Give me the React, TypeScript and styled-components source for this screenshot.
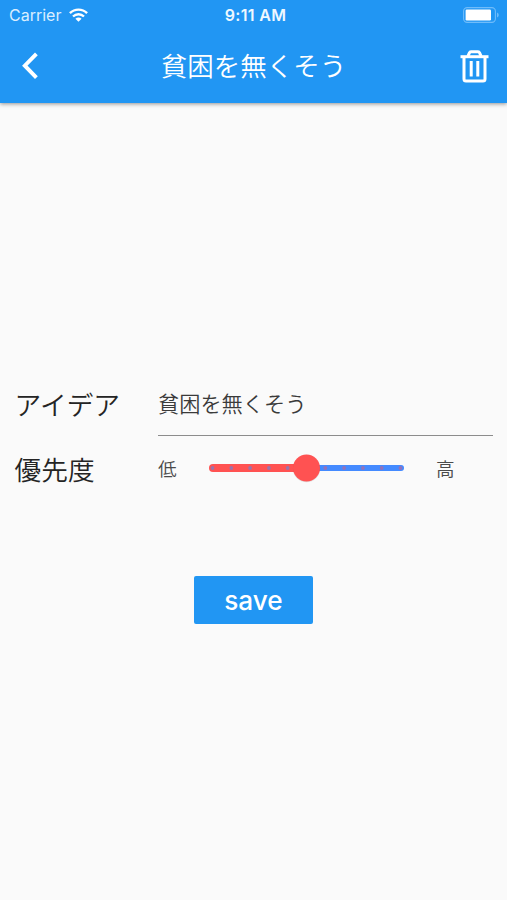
import React, { useState } from "react";
import styled, { createGlobalStyle } from "styled-components";

const GlobalStyle = createGlobalStyle`
  * { box-sizing: border-box; }
  html, body { margin: 0; padding: 0; background: #fafafa; }
  button, input { font: inherit; border: 0; padding: 0; margin: 0; background: none; }
`;

const Screen = styled.div`
  width: 507px;
  height: 900px;
  display: flex;
  flex-direction: column;
  overflow: hidden;
  background: #fafafa;
  font-family: Inter, "Noto Sans CJK JP", sans-serif;
  font-weight: 350;
  color: #242424;
`;

const Header = styled.header`
  flex: none;
  height: 103px;
  background: #2196f3;
  color: #fff;
  box-shadow: 0 1px 4px rgba(0, 0, 0, 0.42);
`;

const StatusBar = styled.div`
  height: 30px;
  display: grid;
  grid-template-columns: 1fr auto 1fr;
  align-items: center;
  padding: 0 8px 0 9px;
`;

const Carrier = styled.div`
  display: flex;
  align-items: center;
  gap: 8px;
  font-size: 16px;
  font-weight: 400;
  line-height: 30px;
  color: #d9eeff;
`;

const Clock = styled.div`
  padding-left: 3px;
  font-size: 16px;
  font-weight: 600;
  line-height: 30px;
  color: #eef8ff;
  letter-spacing: 0.35px;
`;

const Battery = styled.svg`
  justify-self: end;
`;

const NavBar = styled.nav`
  height: 72px;
  display: grid;
  grid-template-columns: 60px 1fr 60px;
  align-items: center;
`;

const IconButton = styled.button<{ $shift?: number }>`
  height: 72px;
  padding-right: ${(p) => p.$shift ?? 0}px;
  display: flex;
  align-items: center;
  justify-content: center;
  color: #fff;
`;

const Title = styled.h1`
  margin: 0;
  font-size: 26.5px;
  font-weight: 350;
  line-height: 36px;
  text-align: center;
`;

const Form = styled.main`
  flex: 1;
  padding: 268px 14px 0 14px;
  display: flex;
  flex-direction: column;
`;

const Row = styled.div<{ $height: number }>`
  height: ${(p) => p.$height}px;
  display: grid;
  grid-template-rows: 100%;
  grid-template-columns: 144px 1fr;
`;

const Label = styled.label`
  padding-left: 0.6px;
  font-size: 26.7px;
  line-height: 68px;
`;

const TextField = styled.input`
  width: 100%;
  height: 65px;
  padding-bottom: 1px;
  border-bottom: 1px solid #8c8c8c;
  outline: 0;
  font-size: 21.2px;
  font-weight: 350;
  color: #3a3a3a;
`;

const PriorityField = styled.div`
  height: 64px;
  display: grid;
  grid-template-columns: 51px 195px 1fr;
  align-items: center;
`;

const Bound = styled.span<{ $inset?: number }>`
  padding-left: ${(p) => p.$inset ?? 0}px;
  padding-top: 1px;
  font-size: 18.6px;
  line-height: 28px;
  color: #4a4a4a;
`;

const SliderArt = styled.svg`
  display: block;
`;

const SaveButton = styled.button`
  align-self: center;
  width: 119px;
  height: 48px;
  margin-top: 76px;
  padding-top: 1px;
  border-radius: 2px;
  background: #2196f3;
  color: #fff;
  font-size: 26.2px;
  font-weight: 500;
  line-height: 48px;
`;

const WifiIcon = () => (
  <svg width="19" height="14" viewBox="0 0 19 14" fill="none" stroke="#fff" strokeWidth="2.4">
    <path d="M0.9 5.2C5.8.4 13.2.4 18.1 5.2" />
    <path d="M4 8.5c3.2-3.1 7.8-3.1 11 0" />
    <path d="M6.4 10.7c1.8-1.7 4.4-1.7 6.2 0L9.5 13.8z" fill="#fff" stroke="none" />
  </svg>
);

const BatteryIcon = () => (
  <Battery width="36" height="16" viewBox="0 0 36 16">
    <rect x="0.6" y="0.6" width="31.8" height="14.8" rx="3.6" fill="none" stroke="#6fbcfa" strokeWidth="1.1" />
    <rect x="2.6" y="2.6" width="25.4" height="10.8" rx="1.2" fill="#fff" />
    <path d="M34 5.5c2.3.8 2.3 4.2 0 5z" fill="#6fbcfa" />
  </Battery>
);

const BackIcon = () => (
  <svg width="16" height="28" viewBox="0 0 16 28" fill="none" stroke="#fff" strokeWidth="3.9">
    <path d="M14.4 1.8 2.8 13.7l11.6 11.9" />
  </svg>
);

const TrashIcon = () => (
  <svg width="29" height="33" viewBox="0 0 29 33" fill="none" stroke="#fff" strokeWidth="3">
    <path d="M0.5 6.7h28" />
    <path d="M7.9 6.2 9.4 2.9q.4-1.2 1.6-1.2h7q1.2 0 1.6 1.2l1.5 3.3" />
    <path d="M4 6.5V29q0 2 2 2h17q2 0 2-2V6.5" />
    <path d="M11.2 11v15.5M17.8 11v15.5" />
  </svg>
);

const STEPS = 10;

const Slider = ({ value }: { value: number }) => {
  const x = 3.5 + value * 18.8;
  return (
    <SliderArt width="195" height="30" viewBox="0 0 195 30" role="slider" aria-valuenow={value} aria-valuemin={0} aria-valuemax={STEPS}>
      <rect x={x} y="12.1" width={195 - x} height="5.8" rx="2.9" fill="#448aff" />
      <rect x="0" y="11" width={x} height="8" rx="4" fill="#ff5252" />
      {Array.from({ length: STEPS + 1 }, (_, i) => (
        <circle key={i} cx={3.5 + i * 18.8} cy="15" r="1.9" fill={i <= value ? "#9d72a8" : "#9172bb"} />
      ))}
      <circle cx={x} cy="15.7" r="13.6" fill="#000" opacity="0.1" />
      <circle cx={x} cy="15" r="13.5" fill="#ff5252" />
    </SliderArt>
  );
};

export default function App() {
  const [idea, setIdea] = useState("貧困を無くそう");
  return (
    <>
      <GlobalStyle />
      <Screen lang="ja">
        <Header>
          <StatusBar>
            <Carrier>
              Carrier
              <WifiIcon />
            </Carrier>
            <Clock>9:11 AM</Clock>
            <BatteryIcon />
          </StatusBar>
          <NavBar>
            <IconButton aria-label="戻る">
              <BackIcon />
            </IconButton>
            <Title>貧困を無くそう</Title>
            <IconButton aria-label="削除" $shift={5}>
              <TrashIcon />
            </IconButton>
          </NavBar>
        </Header>
        <Form>
          <Row $height={65}>
            <Label htmlFor="idea">アイデア</Label>
            <TextField id="idea" value={idea} onChange={(e) => setIdea(e.target.value)} />
          </Row>
          <Row $height={64}>
            <Label>優先度</Label>
            <PriorityField>
              <Bound>低</Bound>
              <Slider value={5} />
              <Bound $inset={32}>高</Bound>
            </PriorityField>
          </Row>
          <SaveButton>save</SaveButton>
        </Form>
      </Screen>
    </>
  );
}
